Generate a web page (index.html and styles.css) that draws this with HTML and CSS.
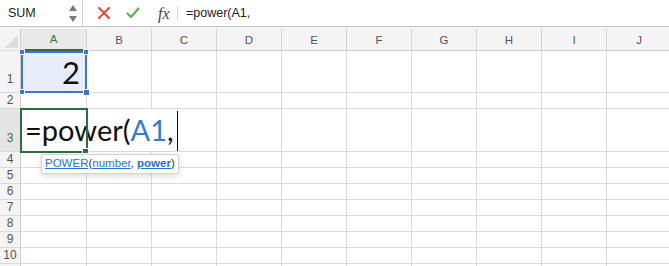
FILE: index.html
```html
<!DOCTYPE html>
<html lang="en">
<head>
    <meta charset="UTF-8">
    <title>Sheet</title>
    <link rel="stylesheet" href="styles.css">
</head>
<body>
<div class="formula-bar row-box">
    <div class="name-box row-box">
        <span class="name-text flex1">SUM</span>
        <div class="spin col-box">
            <svg width="8" height="6" viewBox="0 0 8 6"><path d="M4 0L8 6H0z" fill="#7a7a7a"/></svg>
            <svg width="8" height="6" viewBox="0 0 8 6"><path d="M0 0H8L4 6z" fill="#7a7a7a"/></svg>
        </div>
    </div>
    <div class="tools row-box">
        <svg class="ico-x" width="12" height="12" viewBox="0 0 12 12"><path d="M1 1L11 11M11 1L1 11" stroke="#e5473d" stroke-width="2" stroke-linecap="round"/></svg>
        <svg class="ico-ok" width="14" height="12" viewBox="0 0 14 12"><path d="M1.5 6.5L5 10L12.5 1.5" stroke="#5ab252" stroke-width="2.2" fill="none" stroke-linecap="round" stroke-linejoin="round"/></svg>
        <span class="fx">fx</span>
    </div>
    <div class="formula-text flex1">=power(A1,</div>
</div>
<div class="bar-gap"></div>

<div class="sheet">
    <div class="tr row-box head-tr">
        <div class="th corner"><span class="tri"></span></div>
        <div class="td col-a sel-col">A</div>
        <div class="td">B</div>
        <div class="td">C</div>
        <div class="td">D</div>
        <div class="td">E</div>
        <div class="td">F</div>
        <div class="td">G</div>
        <div class="td">H</div>
        <div class="td">I</div>
        <div class="td">J</div>
    </div>
    <div class="tr row-box r-tall">
        <div class="th">1</div>
        <div class="td col-a a1"><span class="big">2</span><i class="hd h-tl"></i><i class="hd h-tr"></i><i class="hd h-bl"></i><i class="hd h-br"></i></div>
        <div class="td"></div><div class="td"></div><div class="td"></div><div class="td"></div><div class="td"></div><div class="td"></div><div class="td"></div><div class="td"></div><div class="td"></div>
    </div>
    <div class="tr row-box">
        <div class="th">2</div>
        <div class="td col-a"></div>
        <div class="td"></div><div class="td"></div><div class="td"></div><div class="td"></div><div class="td"></div><div class="td"></div><div class="td"></div><div class="td"></div><div class="td"></div>
    </div>
    <div class="tr row-box r-tall r-three">
        <div class="th sel-row">3</div>
        <div class="td col-a a3">
            <div class="editor">=power(<span class="ref">A1</span>,<i class="caret"></i></div>
            <i class="green-box"></i>
            <i class="green-hd"></i>
            <div class="tip">
                <a>POWER</a>(<a>number</a>, <a class="b">power</a>)
            </div>
        </div>
        <div class="td"></div><div class="td"></div><div class="td"></div><div class="td"></div><div class="td"></div><div class="td"></div><div class="td"></div><div class="td"></div><div class="td"></div>
    </div>
    <div class="tr row-box">
        <div class="th">4</div>
        <div class="td col-a"></div>
        <div class="td"></div><div class="td"></div><div class="td"></div><div class="td"></div><div class="td"></div><div class="td"></div><div class="td"></div><div class="td"></div><div class="td"></div>
    </div>
    <div class="tr row-box">
        <div class="th">5</div>
        <div class="td col-a"></div>
        <div class="td"></div><div class="td"></div><div class="td"></div><div class="td"></div><div class="td"></div><div class="td"></div><div class="td"></div><div class="td"></div><div class="td"></div>
    </div>
    <div class="tr row-box">
        <div class="th">6</div>
        <div class="td col-a"></div>
        <div class="td"></div><div class="td"></div><div class="td"></div><div class="td"></div><div class="td"></div><div class="td"></div><div class="td"></div><div class="td"></div><div class="td"></div>
    </div>
    <div class="tr row-box">
        <div class="th">7</div>
        <div class="td col-a"></div>
        <div class="td"></div><div class="td"></div><div class="td"></div><div class="td"></div><div class="td"></div><div class="td"></div><div class="td"></div><div class="td"></div><div class="td"></div>
    </div>
    <div class="tr row-box">
        <div class="th">8</div>
        <div class="td col-a"></div>
        <div class="td"></div><div class="td"></div><div class="td"></div><div class="td"></div><div class="td"></div><div class="td"></div><div class="td"></div><div class="td"></div><div class="td"></div>
    </div>
    <div class="tr row-box">
        <div class="th">9</div>
        <div class="td col-a"></div>
        <div class="td"></div><div class="td"></div><div class="td"></div><div class="td"></div><div class="td"></div><div class="td"></div><div class="td"></div><div class="td"></div><div class="td"></div>
    </div>
    <div class="tr row-box">
        <div class="th">10</div>
        <div class="td col-a"></div>
        <div class="td"></div><div class="td"></div><div class="td"></div><div class="td"></div><div class="td"></div><div class="td"></div><div class="td"></div><div class="td"></div><div class="td"></div>
    </div>
    <div class="tr row-box r-last">
        <div class="th"></div>
        <div class="td col-a"></div>
        <div class="td"></div><div class="td"></div><div class="td"></div><div class="td"></div><div class="td"></div><div class="td"></div><div class="td"></div><div class="td"></div><div class="td"></div>
    </div>
</div>
</body>
</html>
```

FILE: styles.css
```css
html,body{margin:0;padding:0;background:#fff;overflow:hidden;}
body{font-family:"Liberation Sans",Arial,sans-serif;color:#222;width:669px;height:266px;}
.row-box{display:flex;flex-direction:row;flex-wrap:nowrap;}
.col-box{display:flex;flex-direction:column;flex-wrap:nowrap;}
.flex1{flex:1 1 auto;}

/* formula bar */
.formula-bar{height:26px;border-bottom:1px solid #c4c4c4;background:#fff;align-items:center;}
.name-box{width:82px;height:26px;border-right:1px solid #cfcfcf;align-items:center;flex-shrink:0;}
.name-text{font-size:12.5px;padding-left:8px;color:#222;}
.spin{width:8px;margin-right:5px;gap:5px;}
.spin svg{display:block;}
.tools{width:96px;height:26px;align-items:center;flex-shrink:0;position:relative;}
.ico-x{margin-left:15px;}
.ico-ok{margin-left:16px;}
.fx{font-family:"Liberation Serif",serif;font-style:italic;font-size:16px;color:#444;margin-left:18px;padding-right:7px;border-right:1px solid #d6d6d6;line-height:15px;}
.formula-text{font-size:12.5px;padding-left:7px;color:#222;}
.bar-gap{height:2px;background:#f4f4f4;}

/* grid */
.sheet{width:669px;}
.tr{height:16px;box-sizing:border-box;}
.tr>.th,.tr>.td{box-sizing:border-box;border-right:1px solid #dadada;border-bottom:1px solid #dadada;flex-shrink:0;}
.tr>.th{width:21px;background:#f4f4f4;border-right-color:#cdcdcd;font-size:12px;color:#555;text-align:center;line-height:15px;}
.tr>.td{width:65px;position:relative;}
.tr>.td.col-a{width:66px;}
.r-tall{height:42px;}
.r-tall>.th{line-height:56px;}
.r-three{height:43px;}
.r-three>.th{line-height:58px;}

.head-tr{height:22px;}
.head-tr>.td{background:#f4f4f4;border-right-color:#d4d4d4;border-bottom-color:#cdcdcd;font-size:11.5px;color:#555;text-align:center;line-height:22px;}
.head-tr>.sel-col{color:#2a7a46;background:#e9e9e9;border-bottom:2px solid #2d6e3f;line-height:21px;}
.corner{position:relative;}
.corner .tri{position:absolute;right:2px;bottom:2px;width:0;height:0;border-left:13px solid transparent;border-bottom:13px solid #dcdcdc;}
.th.sel-row{background:#e4e4e4;color:#2a7a46;}

/* A1 selection */
.a1{background:#e8eef9;text-align:right;}
.a1::after{content:"";position:absolute;left:0;top:0;right:-1px;bottom:-1px;border:2px solid #3b74d2;box-sizing:border-box;}
.big{font-family:Lato,"Open Sans",sans-serif;font-size:31px;line-height:42px;padding-right:6px;color:#111;}
.hd{position:absolute;width:4px;height:4px;background:#3b74d2;border:1px solid #fff;z-index:2;}
.h-tl{left:-2px;top:-2px;}
.h-tr{right:-3px;top:-2px;}
.h-bl{left:-2px;bottom:-3px;}
.h-br{right:-4px;bottom:-4px;width:5px;height:5px;}

/* A3 editor */
.a3{z-index:3;}
.editor{position:absolute;left:0;top:0;height:42px;background:#fff;white-space:nowrap;font-family:Lato,"Open Sans",sans-serif;font-size:29px;line-height:42px;padding-left:4px;padding-right:6px;color:#111;z-index:1;}
.editor .ref{color:#3a78cf;}
.caret{display:inline-block;width:1px;height:40px;background:#111;vertical-align:top;margin-left:3px;margin-top:2px;}
.green-box{position:absolute;left:-1px;top:-1px;width:68px;height:45px;border:2px solid #2d6e3f;box-sizing:border-box;z-index:2;}
.green-hd{position:absolute;right:-3px;bottom:-3px;width:5px;height:4px;background:#2d6e3f;border:1px solid #fff;z-index:3;}
.tip{position:absolute;left:20px;top:45px;height:18px;padding:0 3px;background:#fff;border:1px solid #d2d2d2;border-radius:2px;box-shadow:0 2px 6px rgba(0,0,0,.15);white-space:nowrap;font-size:11.5px;line-height:17px;color:#333;z-index:4;}
.tip a{color:#2a6fd6;text-decoration:underline;}
.tip a.b{font-weight:bold;}
```
